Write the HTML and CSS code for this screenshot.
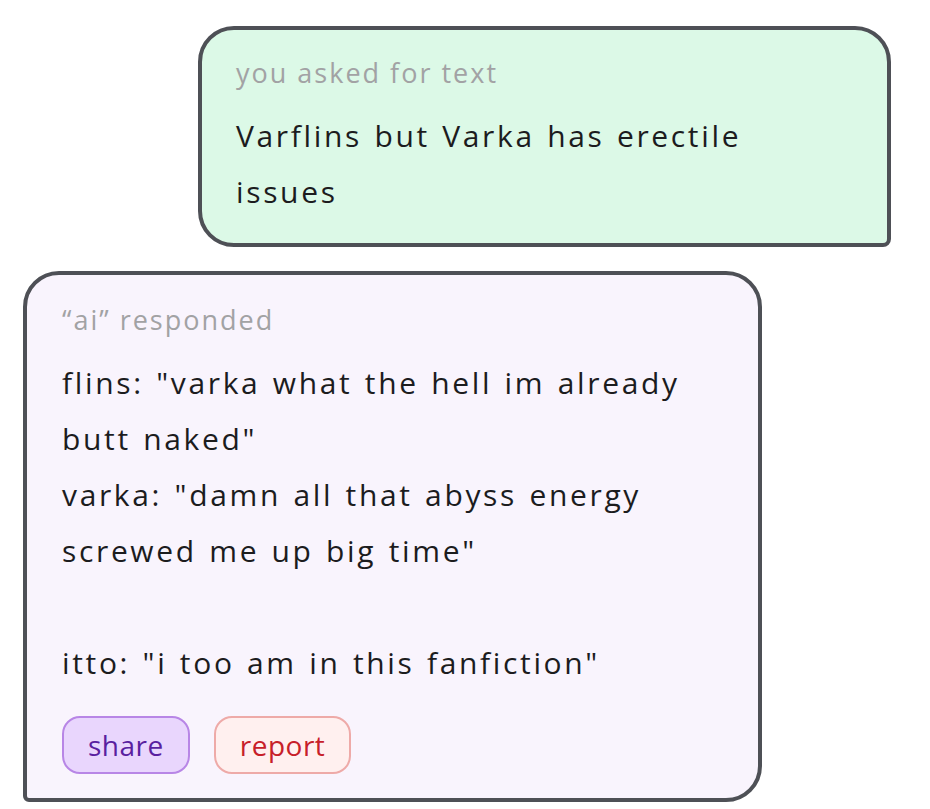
FILE: index.html
```html
<!DOCTYPE html>
<html lang="en">
<head>
<meta charset="utf-8">
<title>chat</title>
<link rel="stylesheet" href="styles.css">
</head>
<body>
<main class="thread">
  <section class="bubble bubble-user">
    <div class="label">you asked for text</div>
    <p class="message">Varflins but Varka has erectile<br>issues</p>
  </section>
  <section class="bubble bubble-ai">
    <div class="label">“ai” responded</div>
    <p class="message">flins: "varka what the hell im already<br>butt naked"<br>varka: "damn all that abyss energy<br>screwed me up big time"<br><br>itto: "i too am in this fanfiction"</p>
    <div class="actions">
      <button class="btn btn-share">share</button>
      <button class="btn btn-report">report</button>
    </div>
  </section>
</main>
</body>
</html>
```
FILE: styles.css
```css
html, body {
  margin: 0;
  padding: 0;
  background: #ffffff;
}
body {
  font-family: "Open Sans", "DejaVu Sans", sans-serif;
  color: #1c1c1e;
}
.thread {
  display: flex;
  flex-direction: column;
  gap: 24px;
  padding: 26px 39px 0 23px;
}
.bubble {
  box-sizing: border-box;
  border: 4px solid #4e5056;
  padding: 27px 34px 23px 34px;
}
.bubble-user {
  align-self: flex-end;
  width: 693px;
  background: #dcf9e7;
  border-radius: 36px 36px 8px 36px;
}
.bubble-ai {
  align-self: flex-start;
  width: 739px;
  background: #f9f4fd;
  border-radius: 36px 36px 36px 6px;
  padding: 29px 35px 24px 35px;
}
.label {
  font-size: 27px;
  line-height: 32px;
  color: #a2a2a4;
  letter-spacing: 2px;
}
.message {
  margin: 19px 0 0 0;
  font-size: 30px;
  font-weight: 500;
  line-height: 56px;
  letter-spacing: 2.65px;
  word-spacing: 2px;
}
.actions {
  display: flex;
  gap: 24px;
  margin-top: 25px;
}
.btn {
  box-sizing: border-box;
  height: 58px;
  padding: 0 24px;
  border-radius: 18px;
  border: 2px solid;
  font-family: inherit;
  font-size: 28px;
  font-weight: 500;
  letter-spacing: 0.5px;
  cursor: pointer;
}
.btn-share {
  background: #e9d6fd;
  border-color: #b886e6;
  color: #5a1fa0;
}
.btn-report {
  background: #fff0ef;
  border-color: #eeaaa8;
  color: #c72029;
}
```
